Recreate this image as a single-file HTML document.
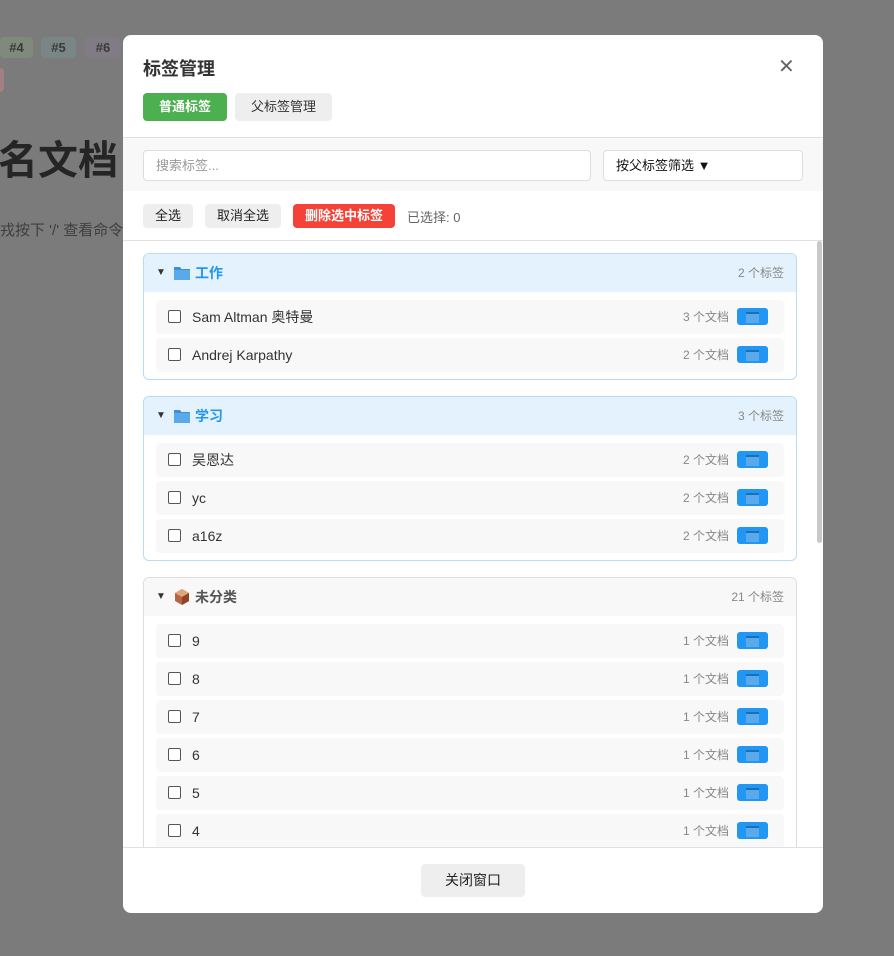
<!DOCTYPE html>
<html><head><meta charset="utf-8"><style>
*{box-sizing:border-box;margin:0;padding:0}
body{width:894px;height:956px;overflow:hidden;background:#7b7b7b;font-family:"Liberation Sans","Noto Sans CJK SC",sans-serif;position:relative;color:#333}
.bg{position:absolute;color:#2a2a2a}
.tg{position:absolute;top:37px;height:21px;border-radius:4px;font-size:13px;font-weight:bold;color:#3a3a3a;line-height:21px;text-align:center}
.modal{position:absolute;left:123px;top:35px;width:700px;height:878px;background:#fff;border-radius:8px;overflow:hidden}
.title{position:absolute;left:20px;top:20px;font-size:18px;font-weight:bold;color:#333}
.close{position:absolute;left:655px;top:19px;font-size:20px;color:#666}
.tab{position:absolute;top:58px;height:28px;border-radius:4px;font-size:13px;line-height:28px;text-align:center}
.filter{position:absolute;left:0;top:102px;width:700px;height:54px;background:#f8f8f8;border-top:1px solid #e0e0e0}
.inp{position:absolute;top:12px;height:31px;border:1px solid #ddd;border-radius:4px;background:#fff;font-size:13px;line-height:29px;padding-left:12px}
.btn{position:absolute;top:169px;height:24px;border-radius:4px;font-size:13px;line-height:24px;text-align:center;background:#eee;color:#222}
.list{position:absolute;left:0;top:205px;width:700px;height:607px;border-top:1px solid #e0e0e0;overflow:hidden}
.sb{position:absolute;right:1px;top:0;width:5px;height:302px;background:#c8c8c8;border-radius:3px}
.grp{position:absolute;left:20px;width:654px;border:1px solid #b8dcf5;border-radius:6px;overflow:hidden;background:#fff}
.gh{height:38px;background:#e3f2fd;position:relative;font-size:13px;margin-bottom:8px}
.gh .arr{position:absolute;left:12px;top:0;line-height:38px;font-size:10px;color:#333}
.gh .ic{position:absolute;left:30px;top:12px}
.gh .nm{position:absolute;left:51px;top:0;line-height:38px;font-weight:bold;color:#2196f3;font-size:14px}
.gh .ct{position:absolute;right:12px;top:0;line-height:38px;color:#888;font-size:12px}
.it{position:relative;margin:0 12px 4px;height:34px;background:#f8f8f8;border-radius:4px;font-size:14px}
.cb{position:absolute;left:12px;top:10px;width:13px;height:13px;border:1px solid #555;border-radius:2px;background:#fff}
.lb{position:absolute;left:36px;top:0;line-height:34px;color:#333}
.dc{position:absolute;right:55px;top:0;line-height:34px;font-size:12px;color:#888}
.fb{position:absolute;right:16px;top:8px;width:31px;height:17px;background:#2196f3;border-radius:3px}
.fb:before{content:"";position:absolute;left:9px;top:4px;width:13px;height:9px;background:#5aa9ea;border-top:2px solid #1c6fb3}
.footer{position:absolute;left:0;top:812px;width:700px;height:66px;border-top:1px solid #e0e0e0}
</style></head><body>
<div class="tg" style="left:0;width:33px;background:#7f8a7c">#4</div>
<div class="tg" style="left:41px;width:35px;background:#7a8585">#5</div>
<div class="tg" style="left:85px;width:36px;background:#807b84">#6</div>
<div class="bg" style="left:0;top:68px;width:4px;height:24px;background:#a08080;border-radius:0 4px 4px 0"></div>
<div class="bg" style="left:-2px;top:128px;font-size:40px;font-weight:bold;color:#252525">名文档</div>
<div class="bg" style="left:0;top:219px;font-size:15px;color:#3e3e3e">戎按下 '/' 查看命令</div>
<div class="modal">
<div class="title">标签管理</div>
<div class="close">✕</div>
<div class="tab" style="left:20px;width:84px;background:#4caf50;color:#fff;font-weight:bold">普通标签</div>
<div class="tab" style="left:112px;width:97px;background:#eee;color:#333">父标签管理</div>
<div class="filter">
<div class="inp" style="left:20px;width:448px;color:#999">搜索标签...</div>
<div class="inp" style="left:480px;width:200px;color:#111">按父标签筛选 ▼</div>
</div>
<div class="btn" style="left:20px;width:50px">全选</div>
<div class="btn" style="left:82px;width:76px">取消全选</div>
<div class="btn" style="left:170px;width:102px;background:#f44336;color:#fff;font-weight:bold">删除选中标签</div>
<div style="position:absolute;left:284px;top:172px;font-size:13px;color:#666">已选择: 0</div>
<div class="list">
<div class="sb"></div>
<div class="grp" style="top:12px;height:127px">
<div class="gh"><span class="arr">▼</span><svg class="ic" width="16" height="14" viewBox="0 0 16 14"><path d="M0 1h6l1.5 2H16v11H0z" fill="#3d8fd6"/><rect x="0" y="4" width="16" height="10" fill="#5aa9ea"/></svg><span class="nm">工作</span><span class="ct">2 个标签</span></div>
<div class="it"><span class="cb"></span><span class="lb">Sam Altman 奥特曼</span><span class="dc">3 个文档</span><span class="fb"></span></div>
<div class="it"><span class="cb"></span><span class="lb">Andrej Karpathy</span><span class="dc">2 个文档</span><span class="fb"></span></div>
</div>
<div class="grp" style="top:155px;height:165px">
<div class="gh"><span class="arr">▼</span><svg class="ic" width="16" height="14" viewBox="0 0 16 14"><path d="M0 1h6l1.5 2H16v11H0z" fill="#3d8fd6"/><rect x="0" y="4" width="16" height="10" fill="#5aa9ea"/></svg><span class="nm">学习</span><span class="ct">3 个标签</span></div>
<div class="it"><span class="cb"></span><span class="lb">吴恩达</span><span class="dc">2 个文档</span><span class="fb"></span></div>
<div class="it"><span class="cb"></span><span class="lb">yc</span><span class="dc">2 个文档</span><span class="fb"></span></div>
<div class="it"><span class="cb"></span><span class="lb">a16z</span><span class="dc">2 个文档</span><span class="fb"></span></div>
</div>
<div class="grp" style="top:336px;height:400px;border-color:#ddd">
<div class="gh" style="background:#f8f8f8"><span class="arr">▼</span><svg class="ic" width="16" height="16" viewBox="0 0 16 16" style="top:11px"><path d="M8 0l7 4v8l-7 4-7-4V4z" fill="#b5653f"/><path d="M8 0l7 4-7 4-7-4z" fill="#e0a57a"/><path d="M8 8v8l7-4V4z" fill="#8e4528"/></svg><span class="nm" style="color:#555">未分类</span><span class="ct">21 个标签</span></div>
<div class="it"><span class="cb"></span><span class="lb">9</span><span class="dc">1 个文档</span><span class="fb"></span></div>
<div class="it"><span class="cb"></span><span class="lb">8</span><span class="dc">1 个文档</span><span class="fb"></span></div>
<div class="it"><span class="cb"></span><span class="lb">7</span><span class="dc">1 个文档</span><span class="fb"></span></div>
<div class="it"><span class="cb"></span><span class="lb">6</span><span class="dc">1 个文档</span><span class="fb"></span></div>
<div class="it"><span class="cb"></span><span class="lb">5</span><span class="dc">1 个文档</span><span class="fb"></span></div>
<div class="it"><span class="cb"></span><span class="lb">4</span><span class="dc">1 个文档</span><span class="fb"></span></div>
</div>
</div>
<div class="footer"><div style="position:absolute;left:298px;top:16px;width:104px;height:33px;background:#eee;border-radius:4px;font-size:14px;line-height:33px;text-align:center;color:#222">关闭窗口</div></div>
</div>
</body></html>
